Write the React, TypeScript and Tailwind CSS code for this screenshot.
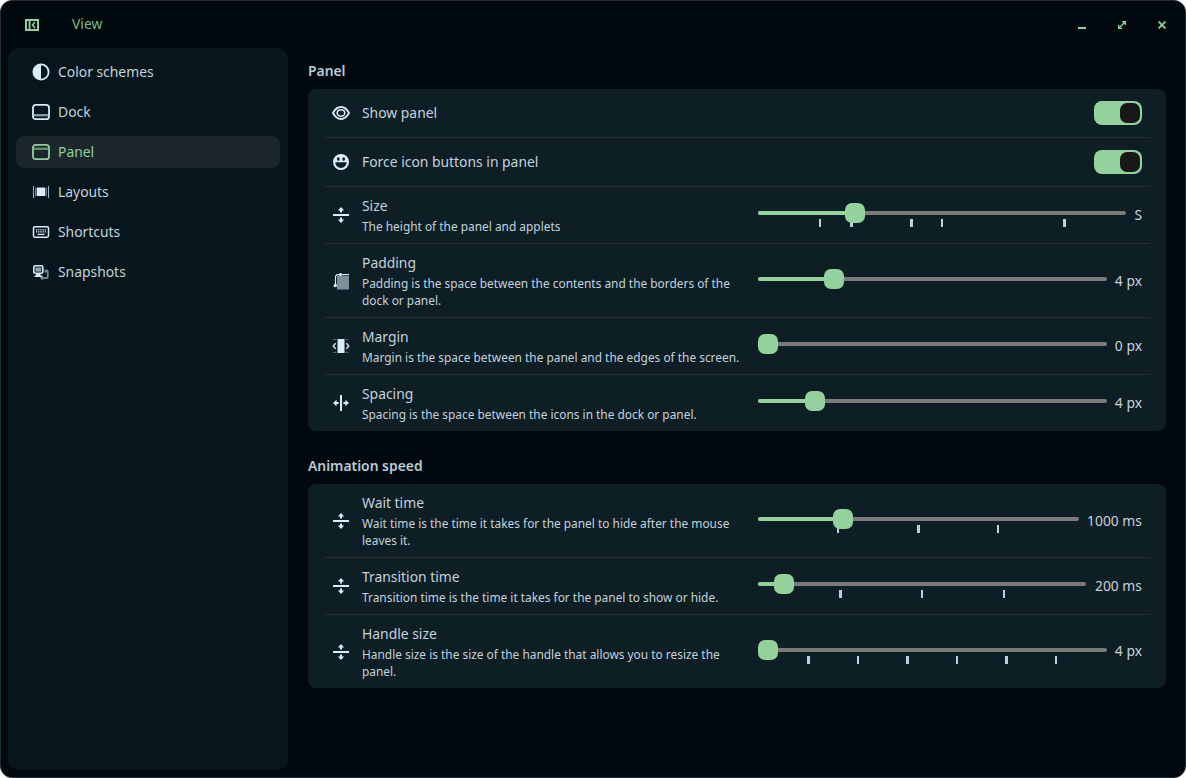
import React from 'react';

const c = 'currentColor';

const icons: Record<string, React.ReactNode> = {
  scheme: (
    <>
      <circle cx="9" cy="9" r="7.6" fill="none" stroke={c} strokeWidth="1.8" />
      <path d="M9 1.400a7.600 7.600 0 0 0 0 15.200z" fill={c} />
    </>
  ),
  dock: (
    <>
      <rect x="1" y="1.800" width="16" height="14.400" rx="2.800" fill="none" stroke={c} strokeWidth="1.800" />
      <rect x="1.800" y="11" width="14.400" height="2.400" fill={c} opacity="0.6" />
    </>
  ),
  panel: (
    <>
      <rect x="1" y="1.800" width="16" height="14.400" rx="2.800" fill="none" stroke={c} strokeWidth="1.800" />
      <rect x="1.800" y="4.600" width="14.400" height="2.400" fill={c} opacity="0.6" />
    </>
  ),
  layouts: (
    <>
      <rect x="5" y="4.500" width="8" height="8.500" rx="0.500" fill={c} />
      <path d="M3 4.200 4.800 5v7.800L3 13.500zM15 4.200 13.200 5v7.800l1.800.700z" fill={c} opacity="0.45" />
      <path d="M1.500 3v12M16.500 3v12" stroke={c} strokeWidth="1" opacity="0.75" fill="none" />
    </>
  ),
  shortcuts: (
    <>
      <rect x="1.500" y="3.800" width="15" height="10.400" rx="1.400" fill="none" stroke={c} strokeWidth="1.500" />
      <path d="M4 6.800h10M4 8.800h10" stroke={c} strokeWidth="1.300" strokeDasharray="1.100 .7" fill="none" />
      <path d="M5.500 11.300h7" stroke={c} strokeWidth="1.300" fill="none" />
    </>
  ),
  snapshots: (
    <>
      <path d="M12.500 6.500h2.200a2 2 0 0 1 2 2V14a2 2 0 0 1-2 2H11v1.800L7.800 15 11 12.200V14h3.700V9.500h-2.200z" fill={c} opacity="0.5" />
      <rect x="1.800" y="2.800" width="9" height="7.400" rx="1.400" fill="none" stroke={c} strokeWidth="1.600" />
      <rect x="3.400" y="4.400" width="5.800" height="4.200" fill={c} opacity="0.65" />
      <path d="M4 11h4.500v1.400H10V14H2.500v-1.600H4z" fill={c} />
    </>
  ),
  eye: (
    <>
      <path d="M1 9C3.500 4.300 6 3 9 3s5.500 1.300 8 6c-2.500 4.700-5 6-8 6s-5.500-1.300-8-6z" fill="none" stroke={c} strokeWidth="1.800" />
      <ellipse cx="9" cy="9" rx="3.800" ry="3.300" fill="none" stroke={c} strokeWidth="1.600" />
    </>
  ),
  smile: (
    <path
      fillRule="evenodd"
      d="M9 1a8 8 0 1 1 0 16A8 8 0 0 1 9 1zM6.300 4.300a1.400 1.800 0 1 0 0 3.600 1.400 1.800 0 0 0 0-3.600zm5.400 0a1.400 1.800 0 1 0 0 3.600 1.400 1.800 0 0 0 0-3.600zM3.300 9.200c.1 3.400 2.500 5.700 5.700 5.700s5.600-2.300 5.700-5.700z"
      fill={c}
    />
  ),
  vresize: (
    <>
      <rect x="1" y="8" width="16" height="2" fill={c} />
      <path d="M9 1 5.800 4.600h2.200v2h2v-2h2.200zM9 17l-3.200-3.600h2.200v-2h2v2h2.200z" fill={c} />
    </>
  ),
  padding: (
    <>
      <rect x="5" y="4" width="12" height="13.500" fill={c} opacity="0.55" />
      <path d="M9 2.600h8M8 2.600H6A2.500 2.500 0 0 0 3.500 5v8" stroke={c} strokeWidth="1.100" fill="none" />
      <circle cx="8.500" cy="2.600" r="1.500" fill={c} />
      <circle cx="3.300" cy="13.500" r="1.700" fill={c} />
    </>
  ),
  margin: (
    <>
      <rect x="5.500" y="2" width="7" height="14" fill={c} />
      <path d="M3.700 6.300 1.200 9l2.500 2.700M14.300 6.300 16.800 9l-2.500 2.700" stroke={c} strokeWidth="1.300" fill="none" />
      <path d="M1 2.500h3.500M13.500 2.500H17M1 15.500h3.500M13.500 15.500H17" stroke={c} strokeWidth="1" strokeDasharray="1 1" opacity="0.5" fill="none" />
    </>
  ),
  hspace: (
    <>
      <rect x="8" y="1" width="2" height="16" fill={c} />
      <path d="M1 9l3.600-3.200v2.200h2v2h-2v2.200zM17 9l-3.600-3.200v2.200h-2v2h2v2.200z" fill={c} />
    </>
  ),
};

const Icon = ({ name }: { name: string }) => (
  <svg viewBox="0 0 18 18" className="w-[18px] h-[18px] shrink-0">
    {icons[name]}
  </svg>
);

const NAV = [
  { icon: 'scheme', label: 'Color schemes' },
  { icon: 'dock', label: 'Dock' },
  { icon: 'panel', label: 'Panel', active: true },
  { icon: 'layouts', label: 'Layouts' },
  { icon: 'shortcuts', label: 'Shortcuts' },
  { icon: 'snapshots', label: 'Snapshots' },
];

const Toggle = () => (
  <div className="w-12 h-6 rounded-[8px] bg-[#93d29c] flex items-center justify-end pr-[2px] shrink-0">
    <div className="w-5 h-5 rounded-[7px] bg-[#181818]" />
  </div>
);

interface SliderProps {
  label: string;
  width: number;
  thumb: number;
  ticks?: number[];
  raiseLabel?: boolean;
}

// thumb and ticks are in px from the left edge of the track
const Slider = ({ label, width, thumb, ticks = [], raiseLabel }: SliderProps) => (
  <div className="w-[384px] shrink-0 flex items-center justify-between">
    <div className="relative h-6" style={{ width }}>
      <div className="absolute top-[8px] left-0 right-0 h-1 rounded-full bg-[#7a7a7a]" />
      <div className="absolute top-[8px] left-0 h-1 rounded-full bg-[#93d29c]" style={{ width: thumb }} />
      {ticks.map((t) => (
        <div key={t} className="absolute top-[16px] w-[2.5px] h-2 bg-[#bcd0dc]" style={{ left: t - 1.25 }} />
      ))}
      <div className="absolute top-0 w-5 h-5 rounded-[7px] bg-[#93d29c]" style={{ left: thumb - 10 }} />
    </div>
    <span className={`text-[13.88px] text-[#c2d3dd] leading-5 whitespace-nowrap ${raiseLabel ? 'pb-[2px]' : ''}`}>
      {label}
    </span>
  </div>
);

const Switch = ({ icon, title }: { icon: string; title: string }) => (
  <div className="h-12 flex items-center gap-3 text-[#d9ecf7]">
    <Icon name={icon} />
    <span className="text-[13.88px] leading-5 text-[#c2d3dd] flex-1 pb-px">{title}</span>
    <Toggle />
  </div>
);

interface RowProps extends SliderProps {
  icon: string;
  title: string;
  desc: string;
  height: string;
}

const Row = ({ icon, title, desc, height, ...slider }: RowProps) => (
  <div className={`${height} flex items-center gap-3 text-[#d9ecf7]`}>
    <Icon name={icon} />
    <div className="w-[384px] shrink-0 mt-[1px]">
      <div className="text-[13.88px] leading-[20px] text-[#c2d3dd]">{title}</div>
      <div className="text-[11.9px] leading-[17px] mt-[2px] text-[#c2d3dd]">{desc}</div>
    </div>
    <div className="ml-auto">
      <Slider {...slider} />
    </div>
  </div>
);

const Divider = () => <div className="h-px bg-[#232f35]" />;

const App: React.FC = () => {
  return (
    <div
      className="w-[1186px] h-[778px] rounded-[12px] border border-[#1f2c33] bg-[#01090e] overflow-hidden flex flex-col"
      style={{ fontFamily: '"Noto Sans", sans-serif' }}
    >
      <header className="h-[47px] shrink-0 flex items-center pl-[24px] pr-[19px] text-[#8fd09a]">
        <svg viewBox="0 0 14 12" className="w-[14px] h-3">
          <rect width="14" height="12" fill="#8fd09a" />
          <rect x="2" y="2" width="1.600" height="8" fill="#01090e" />
          <rect x="5.500" y="2" width="6.500" height="8" fill="#01090e" />
          <path d="M10 3 7.500 6l2.500 3" fill="none" stroke="#8fd09a" strokeWidth="1.600" />
        </svg>
        <span className="ml-[33px] text-[13.88px] leading-5 text-[#78b884] pb-px">View</span>
        <div className="ml-auto flex items-center gap-[32px]">
          <svg viewBox="0 0 8 8" className="w-2 h-2">
            <rect x="0" y="6" width="8" height="2" fill={c} />
          </svg>
          <svg viewBox="0 0 8 8" className="w-2 h-2">
            <path d="M1 7 7 1M4 .6h3.400V4M.6 4v3.400H4" stroke={c} strokeWidth="1.300" fill="none" />
          </svg>
          <svg viewBox="0 0 8 8" className="w-2 h-2">
            <path d="M.5.500l7 7M7.500.500l-7 7" stroke={c} strokeWidth="1.900" fill="none" />
          </svg>
        </div>
      </header>

      <div className="flex flex-1 min-h-0 pl-[7px] pr-[19px] pb-[7px] gap-[20px]">
        <nav className="w-[280px] shrink-0 rounded-[10px] bg-[#06161c] p-2 flex flex-col gap-2">
          {NAV.map((item) => (
            <div
              key={item.label}
              className={`h-8 rounded-[8px] pl-4 flex items-center gap-2 text-[13.88px] leading-5 ${
                item.active ? 'bg-[#1b272d] text-[#8fd09a]' : 'text-[#c2d3dd]'
              }`}
            >
              <span className={item.active ? 'text-[#8fd09a]' : 'text-[#d9ecf7]'}>
                <Icon name={item.icon} />
              </span>
              <span className="pb-px">{item.label}</span>
            </div>
          ))}
        </nav>

        <main className="flex-1 min-w-0 pt-[13px]">
          <h2 className="text-[13.88px] leading-[20px] font-semibold text-[#b9cad4] mb-[8px]">Panel</h2>
          <section className="rounded-[8px] bg-[#0e1e25] px-4">
            <div className="px-2">
              <Switch icon="eye" title="Show panel" />
            </div>
            <Divider />
            <div className="px-2">
              <Switch icon="smile" title="Force icon buttons in panel" />
            </div>
            <Divider />
            <div className="px-2">
              <Row
                icon="vresize"
                title="Size"
                desc="The height of the panel and applets"
                height="h-[56px]"
                label="S"
                width={368}
                thumb={97}
                ticks={[62, 93.5, 153.5, 184, 306.5]}
              />
            </div>
            <Divider />
            <div className="px-2">
              <Row
                icon="padding"
                title="Padding"
                desc="Padding is the space between the contents and the borders of the dock or panel."
                height="h-[73px]"
                label="4 px"
                width={349}
                thumb={76}
              />
            </div>
            <Divider />
            <div className="px-2">
              <Row
                icon="margin"
                title="Margin"
                desc="Margin is the space between the panel and the edges of the screen."
                height="h-[56px]"
                label="0 px"
                width={349}
                thumb={10}
              />
            </div>
            <Divider />
            <div className="px-2">
              <Row
                icon="hspace"
                title="Spacing"
                desc="Spacing is the space between the icons in the dock or panel."
                height="h-[56px]"
                label="4 px"
                width={349}
                thumb={57}
              />
            </div>
          </section>

          <h2 className="text-[13.88px] leading-[20px] font-semibold text-[#b9cad4] mt-[25px] mb-[8px]">Animation speed</h2>
          <section className="rounded-[8px] bg-[#0e1e25] px-4">
            <div className="px-2">
              <Row
                icon="vresize"
                title="Wait time"
                desc="Wait time is the time it takes for the panel to hide after the mouse leaves it."
                height="h-[73px]"
                label="1000 ms"
                width={321}
                thumb={85}
                ticks={[80, 160.5, 240]}
              />
            </div>
            <Divider />
            <div className="px-2">
              <Row
                icon="vresize"
                title="Transition time"
                desc="Transition time is the time it takes for the panel to show or hide."
                height="h-[56px]"
                label="200 ms"
                width={328}
                thumb={25.5}
                ticks={[82.5, 164, 246]}
              />
            </div>
            <Divider />
            <div className="px-2">
              <Row
                icon="vresize"
                title="Handle size"
                desc="Handle size is the size of the handle that allows you to resize the panel."
                height="h-[73px]"
                label="4 px"
                width={349}
                thumb={10}
                ticks={[50.5, 100, 149.5, 199, 248.5, 298]}
                raiseLabel
              />
            </div>
          </section>
        </main>
      </div>
    </div>
  );
};

export default App;
